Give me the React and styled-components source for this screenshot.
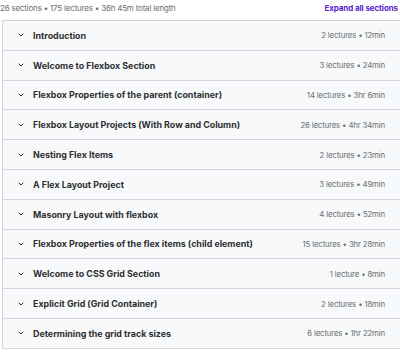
import React from 'react';
import styled, { createGlobalStyle } from 'styled-components';

const GlobalStyle = createGlobalStyle`
  body {
    margin: 0;
    background: #ffffff;
    font-family: Inter, "Liberation Sans", sans-serif;
    color: #2d2f31;
  }
`;

const sections = [
  { title: 'Introduction', lectures: 2, length: '12min' },
  { title: 'Welcome to Flexbox Section', lectures: 3, length: '24min' },
  { title: 'Flexbox Properties of the parent (container)', lectures: 14, length: '3hr 6min' },
  { title: 'Flexbox Layout Projects (With Row and Column)', lectures: 26, length: '4hr 34min' },
  { title: 'Nesting Flex Items', lectures: 2, length: '23min' },
  { title: 'A Flex Layout Project', lectures: 3, length: '49min' },
  { title: 'Masonry Layout with flexbox', lectures: 4, length: '52min' },
  { title: 'Flexbox Properties of the flex items (child element)', lectures: 15, length: '3hr 28min' },
  { title: 'Welcome to CSS Grid Section', lectures: 1, length: '8min' },
  { title: 'Explicit Grid (Grid Container)', lectures: 2, length: '18min' },
  { title: 'Determining the grid track sizes', lectures: 6, length: '1hr 22min' },
];

const Page = styled.div`
  width: 400px;
  display: flex;
  flex-direction: column;
  gap: 5px;
`;

const Header = styled.div`
  display: flex;
  justify-content: space-between;
  align-items: center;
  height: 15px;
  padding: 0 2px 0 0;
`;

const Summary = styled.span`
  font-size: 8px;
  color: #6a6f73;
  letter-spacing: -0.2px;
`;

const ExpandLink = styled.button`
  border: none;
  background: none;
  padding: 0;
  font-family: inherit;
  font-size: 8px;
  font-weight: 700;
  letter-spacing: -0.1px;
  color: #5624d0;
  cursor: pointer;
`;

const Panel = styled.div`
  margin-left: 2px;
  border: 1px solid #d1d7dc;
  border-right: none;
  display: flex;
  flex-direction: column;
`;

const Row = styled.div`
  display: flex;
  align-items: center;
  height: 28.8px;
  padding: 0 15px;
  background: #f7f9fa;
  border-bottom: ${({ $last }) => ($last ? 'none' : '1px solid #d1d7dc')};
`;

const Chevron = styled.svg`
  width: 6px;
  height: 6px;
  flex-shrink: 0;
  margin-right: 9px;
`;

const Title = styled.span`
  flex: 1;
  font-size: 8.9px;
  font-weight: 700;
  color: #2d2f31;
  white-space: nowrap;
`;

const Meta = styled.span`
  font-size: 7.8px;
  color: #6a6f73;
  white-space: nowrap;
  letter-spacing: -0.15px;
`;

function SectionRow({ section, last }) {
  const word = section.lectures === 1 ? 'lecture' : 'lectures';
  return (
    <Row $last={last}>
      <Chevron viewBox="0 0 6 6">
        <path d="M1 2 L3 4 L5 2" fill="none" stroke="#2d2f31" strokeWidth="1" strokeLinecap="round" strokeLinejoin="round" />
      </Chevron>
      <Title>{section.title}</Title>
      <Meta>{section.lectures} {word} • {section.length}</Meta>
    </Row>
  );
}

export default function App() {
  return (
    <>
      <GlobalStyle />
      <Page>
        <Header>
          <Summary>26 sections • 175 lectures • 36h 45m total length</Summary>
          <ExpandLink>Expand all sections</ExpandLink>
        </Header>
        <Panel>
          {sections.map((s, i) => (
            <SectionRow key={s.title} section={s} last={i === sections.length - 1} />
          ))}
        </Panel>
      </Page>
    </>
  );
}
